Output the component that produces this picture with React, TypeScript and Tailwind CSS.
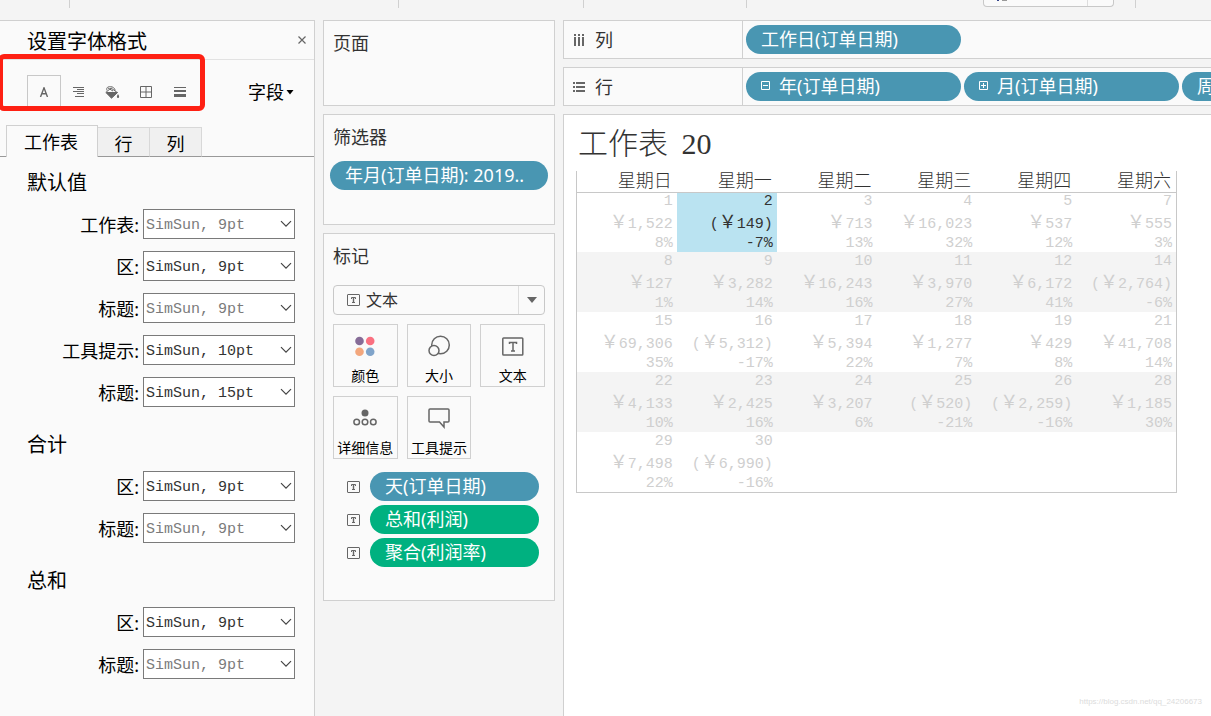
import type { ReactNode } from 'react';
import clsx from 'clsx';

const UI_FONT = "font-['Noto_Sans','Noto_Sans_CJK_SC',sans-serif]";
const MONO_FONT = "font-['Liberation_Mono','Noto_Sans_CJK_SC',monospace]";

type Field = { label: string; size: number; muted?: boolean };

const SECTIONS: { title: string; fields: Field[] }[] = [
  {
    title: '默认值',
    fields: [
      { label: '工作表:', size: 9, muted: true },
      { label: '区:', size: 9 },
      { label: '标题:', size: 9, muted: true },
      { label: '工具提示:', size: 10 },
      { label: '标题:', size: 15 },
    ],
  },
  {
    title: '合计',
    fields: [
      { label: '区:', size: 9 },
      { label: '标题:', size: 9, muted: true },
    ],
  },
  {
    title: '总和',
    fields: [
      { label: '区:', size: 9 },
      { label: '标题:', size: 9, muted: true },
    ],
  },
];

const WEEKDAYS = ['星期日', '星期一', '星期二', '星期三', '星期四', '星期六'];

type Day = [day: string, amount: string, ratio: string] | null;

const WEEKS: Day[][] = [
  [['1', '￥1,522', '8%'], ['2', '(￥149)', '-7%'], ['3', '￥713', '13%'], ['4', '￥16,023', '32%'], ['5', '￥537', '12%'], ['7', '￥555', '3%']],
  [['8', '￥127', '1%'], ['9', '￥3,282', '14%'], ['10', '￥16,243', '16%'], ['11', '￥3,970', '27%'], ['12', '￥6,172', '41%'], ['14', '(￥2,764)', '-6%']],
  [['15', '￥69,306', '35%'], ['16', '(￥5,312)', '-17%'], ['17', '￥5,394', '22%'], ['18', '￥1,277', '7%'], ['19', '￥429', '8%'], ['21', '￥41,708', '14%']],
  [['22', '￥4,133', '10%'], ['23', '￥2,425', '16%'], ['24', '￥3,207', '6%'], ['25', '(￥520)', '-21%'], ['26', '(￥2,259)', '-16%'], ['28', '￥1,185', '30%']],
  [['29', '￥7,498', '22%'], ['30', '(￥6,990)', '-16%'], null, null, null, null],
];

function TextMarkIcon({ className }: { className: string }) {
  return (
    <svg viewBox="0 0 13 12" className={className} fill="none" stroke="#666">
      <rect x="0.5" y="0.5" width="12" height="11" rx="0.5" />
      <path d="M4.5 5V3.5h4V5M5 8.5h3" />
      <path d="M6.5 3.5v5" strokeWidth="1.4" />
    </svg>
  );
}

function Chevron() {
  return (
    <svg viewBox="0 0 12 8" className="pointer-events-none absolute right-[3px] top-[11px] h-2 w-3" fill="none" stroke="#444" strokeWidth="1.2">
      <path d="M1 1.2l5 5 5-5" />
    </svg>
  );
}

function FontField({ id, field }: { id: string; field: Field }) {
  return (
    <div className="flex h-[42px] items-start justify-end pr-[19px]">
      <label htmlFor={id} className="pr-1 text-lg leading-8 text-black">
        {field.label}
      </label>
      <div className="relative w-[152px]">
        <select
          id={id}
          className={clsx(
            'block h-[30px] w-full appearance-none border border-[#7a7a7a] bg-white pl-0.5 pt-1 text-[15px]',
            MONO_FONT,
            field.muted ? 'text-[#7b7b7b]' : 'text-[#333]',
          )}
        >
          <option>{`SimSun, ${field.size}pt`}</option>
        </select>
        <Chevron />
      </div>
    </div>
  );
}

function FormatPanel() {
  return (
    <aside className="relative flex w-[315px] shrink-0 flex-col border-r border-t border-[#d0d0d0] bg-[#fafafa]">
      <header className="flex h-[39px] items-center justify-between border-b border-[#e2e2e2] pl-[27px] pr-[7px]">
        <h1 className="pt-[3px] text-xl leading-6 text-black">设置字体格式</h1>
        <button type="button" aria-label="关闭" className="flex h-5 w-2.5 items-center">
          <svg viewBox="0 0 10 10" className="h-2.5 w-2.5" stroke="#666" strokeWidth="1.2">
            <path d="M1.5 1.5l7 7M8.5 1.5l-7 7" />
          </svg>
        </button>
      </header>

      <div className="flex h-[65px] items-start pt-[15px]">
        <button type="button" aria-label="字体" className="ml-[27px] flex h-[34px] w-[34px] items-center justify-center border border-[#c8c8c8]">
          <svg viewBox="0 0 10 10" className="h-2.5 w-2.5" fill="none" stroke="#666" strokeWidth="1.4">
            <path d="M1.5 10L5 .8 8.500 10M2.800 6.800h4.400" />
          </svg>
        </button>
        <button type="button" aria-label="对齐" className="flex h-[34px] w-[34px] items-center justify-center">
          <svg viewBox="0 0 11 10" className="h-2.5 w-[11px]" stroke="#666">
            <path d="M0 .5h11M4 2.500h7M0 4.500h11M4 6.500h7M2 9.500h9" />
          </svg>
        </button>
        <button type="button" aria-label="阴影" className="flex h-[34px] w-[34px] items-center justify-center">
          <svg viewBox="0 0 15 13" className="h-[13px] w-[15px]" fill="none" stroke="#666">
            <path d="M.8 6.500L6 2l6.200 4.500L6.500 12z" />
            <path d="M1.500 6.500h11l-6 5.500z" fill="#666" />
            <path d="M2 4.500C1 1.500 3 .5 5.500.7 8 .7 9.500 2 10.300 4.500M3 2l5 3" />
            <path d="M13 8c1.500 2.200 1.500 4 0 4s-1.500-1.800 0-4z" fill="#666" stroke="none" />
          </svg>
        </button>
        <button type="button" aria-label="边界" className="flex h-[34px] w-[34px] items-center justify-center">
          <svg viewBox="0 0 12 12" className="h-3 w-3" fill="none" stroke="#666">
            <path d="M.5.5h11v11H.5zM6 .5v11M.5 6h11" />
          </svg>
        </button>
        <button type="button" aria-label="线" className="flex h-[34px] w-[34px] items-center justify-center">
          <svg viewBox="0 0 12 10" className="h-2.5 w-3" fill="#666">
            <path d="M0 0h12v1H0zM0 3h12v2H0zM0 7h12v3H0z" />
          </svg>
        </button>
        <button type="button" className="ml-auto mr-5 flex h-[34px] items-center gap-0.5 text-lg text-black">
          字段
          <svg viewBox="0 0 8 5" className="h-[5px] w-2" fill="#000">
            <path d="M.5 0h7L4 4.500z" />
          </svg>
        </button>
      </div>

      <div className="flex h-8 items-end" role="tablist">
        <div className="h-8 w-1.5 border-b border-[#999]" />
        <button type="button" role="tab" aria-selected="true" className="h-8 w-[92px] border-x border-t border-[#d0d0d0] pr-0.5 text-lg text-black">
          工作表
        </button>
        <button type="button" role="tab" aria-selected="false" className="h-[30px] w-[51px] border-b border-t border-b-[#999] border-t-[#d8d8d8] bg-[#f0f0f0] pt-0.5 text-lg text-black">
          行
        </button>
        <button type="button" role="tab" aria-selected="false" className="h-[30px] w-[53px] border border-[#d8d8d8] border-b-[#999] bg-[#f0f0f0] pt-0.5 text-lg text-black">
          列
        </button>
        <div className="h-8 flex-1 border-b border-[#999]" />
      </div>

      {SECTIONS.map((section, s) => (
        <section key={section.title}>
          <h2 className="pl-[27px] text-xl leading-[52px] text-black">{section.title}</h2>
          {section.fields.map((field, f) => (
            <FontField key={f} id={`font-${s}-${f}`} field={field} />
          ))}
        </section>
      ))}

      <div className="pointer-events-none absolute -left-0.5 top-[33px] h-[57px] w-[207px] rounded-md border-[5px] border-[#fe2013]" />
    </aside>
  );
}

function Pill({ children, green, className }: { children: ReactNode; green?: boolean; className?: string }) {
  return (
    <button
      type="button"
      className={clsx(
        'flex h-[29px] shrink-0 items-center overflow-hidden whitespace-nowrap rounded-full pb-0.5 pl-[15px] text-lg text-white',
        green ? 'bg-[#00b180]' : 'bg-[#4996b2]',
        className,
      )}
    >
      {children}
    </button>
  );
}

function ExpandIcon({ plus }: { plus?: boolean }) {
  return (
    <svg viewBox="0 0 9 9" className="mr-[9px] h-[9px] w-[9px]" fill="none" stroke="#fff">
      <path d={plus ? 'M.5.5h8v8h-8zM2 4.500h5M4.500 2v5' : 'M.5.5h8v8h-8zM2 4.500h5'} />
    </svg>
  );
}

function MarkButton({ label, children }: { label: string; children: ReactNode }) {
  return (
    <button type="button" className="flex h-[63px] flex-col items-center justify-between border border-[#d0d0d0] pt-2.5 text-sm leading-5 text-black">
      <svg viewBox="0 0 24 24" className="h-6 w-6" fill="none" stroke="#666" strokeWidth="1.5">
        {children}
      </svg>
      <span className="whitespace-nowrap">{label}</span>
    </button>
  );
}

function Cards() {
  return (
    <div className="flex w-[232px] shrink-0 flex-col gap-2 text-[#333]">
      <section className="h-[86px] border border-[#d0d0d0] bg-[#fafafa] px-[9px] pt-2">
        <h2 className="text-lg">页面</h2>
      </section>

      <section className="h-[111px] border border-[#d0d0d0] bg-[#fafafa] px-1.5 pt-2">
        <h2 className="mb-2.5 pl-[3px] text-lg">筛选器</h2>
        <Pill className="w-full">年月(订单日期): 2019..</Pill>
      </section>

      <section className="h-[368px] border border-[#d0d0d0] bg-[#fafafa] px-[9px] pt-2">
        <h2 className="mb-[15px] text-lg">标记</h2>
        <div className="relative mb-[9px]">
          <select aria-label="标记类型" className="block h-[30px] w-full appearance-none rounded-sm border border-[#c8c8c8] pl-8 text-base text-[#333]">
            <option>文本</option>
          </select>
          <TextMarkIcon className="pointer-events-none absolute left-3.5 top-[9px] h-3 w-[13px]" />
          <div className="pointer-events-none absolute inset-y-px right-px flex w-[26px] items-center justify-center border-l border-[#ddd]">
            <svg viewBox="0 0 10 6" className="h-1.5 w-2.5" fill="#666">
              <path d="M0 0h10L5 6z" />
            </svg>
          </div>
        </div>
        <div className="grid grid-cols-3 gap-[9px]">
          <MarkButton label="颜色">
            <g stroke="none">
              <circle cx="6.500" cy="6" r="4.300" fill="#866c97" />
              <circle cx="17.200" cy="6" r="4.300" fill="#fa7080" />
              <circle cx="6.500" cy="16.700" r="4.300" fill="#f3a77d" />
              <circle cx="17.200" cy="16.700" r="4.300" fill="#80a4ca" />
            </g>
          </MarkButton>
          <MarkButton label="大小">
            <circle cx="13.500" cy="10" r="8.800" />
            <circle cx="7" cy="15.500" r="5" fill="#fafafa" />
          </MarkButton>
          <MarkButton label="文本">
            <rect x="1.800" y="3" width="20" height="17" rx="0.8" />
            <path d="M8.500 9V7.500h7V9M12 7.500v8.500M10 16h4" />
          </MarkButton>
          <MarkButton label="详细信息">
            <circle cx="12" cy="6" r="3.500" fill="#666" stroke="none" />
            <circle cx="3.700" cy="15" r="2.800" />
            <circle cx="12" cy="15" r="2.800" />
            <circle cx="20.300" cy="15" r="2.800" />
          </MarkButton>
          <MarkButton label="工具提示">
            <path d="M3 2h18q1 0 1 1v11q0 1-1 1h-4v5l-4.500-5H3q-1 0-1-1V3q0-1 1-1z" />
          </MarkButton>
        </div>
        <ul className="mt-[13px] flex flex-col gap-1 pl-3.5 pr-1.5">
          {[
            { text: '天(订单日期)', green: false },
            { text: '总和(利润)', green: true },
            { text: '聚合(利润率)', green: true },
          ].map((mark) => (
            <li key={mark.text} className="flex items-center gap-2.5">
              <TextMarkIcon className="h-3 w-[13px]" />
              <Pill green={mark.green} className="flex-1">
                {mark.text}
              </Pill>
            </li>
          ))}
        </ul>
      </section>
    </div>
  );
}

function Shelf({ label, icon, children }: { label: string; icon: ReactNode; children: ReactNode }) {
  return (
    <section className="flex h-[39px] overflow-hidden border-y border-l border-[#d0d0d0] bg-[#fafafa]">
      <div className="flex w-[179px] shrink-0 items-center gap-2.5 border-r border-[#d0d0d0] pl-[9px] text-lg text-[#333]">
        <svg viewBox="0 0 12 12" className="h-3 w-3" fill="#666">
          {icon}
        </svg>
        <h2>{label}</h2>
      </div>
      <div className="flex min-w-0 flex-1 items-center gap-[3px] pl-[3px]">{children}</div>
    </section>
  );
}

function Amount({ text }: { text: string }) {
  const [before, after] = text.split('￥');
  return (
    <>
      {before}
      <span className="text-lg leading-5">￥</span>
      {after}
    </>
  );
}

function Sheet() {
  return (
    <main className="flex flex-1 flex-col border-l border-t border-[#d0d0d0] bg-white pl-3">
      <h1 className="mb-1.5 mt-[7px] font-['Liberation_Serif','Noto_Sans_CJK_SC',serif] pl-0.5 text-3xl font-light leading-[43px] text-[#333]">
        <span className="mr-1.5">工作表</span> 20
      </h1>
      <table className={clsx('w-[601px] table-fixed border-separate border-spacing-0 border-x border-b border-[#c8c8c8] text-right', MONO_FONT)}>
        <thead>
          <tr>
            {WEEKDAYS.map((day) => (
              <th key={day} scope="col" className="h-[22px] border-b border-[#c8c8c8] p-0 pr-[5px] text-lg font-light leading-5 text-[#333]">
                {day}
              </th>
            ))}
          </tr>
        </thead>
        <tbody className="text-[15px] leading-5 text-[#cfcfcf]">
          {WEEKS.map((week, w) => (
            <tr key={w} className="even:bg-[#f4f4f4]">
              {week.map((day, d) => (
                <td key={d} className={clsx('p-0 pr-1', w === 0 ? 'h-[59px]' : 'h-[60px]', day?.[0] === '2' && 'bg-[#bae3f1] text-[#333]')}>
                  {day && (
                    <>
                      <div className="h-5 leading-[18px]">{day[0]}</div>
                      <div className="h-[21px]">
                        <Amount text={day[1]} />
                      </div>
                      <div className="h-[18px]">{day[2]}</div>
                    </>
                  )}
                </td>
              ))}
            </tr>
          ))}
        </tbody>
      </table>
      <footer className="mt-auto pb-1.5 pr-[9px] text-right font-['Liberation_Sans',sans-serif] text-[8px] leading-4 text-[#dcdcdc]">
        https://blog.csdn.net/qq_24206673
      </footer>
    </main>
  );
}

function TopStrip() {
  return (
    <div className="flex h-5 shrink-0 items-start">
      <div className="h-2 w-[70px] border-r border-[#d0d0d0]" />
      <div className="h-2 w-[329px] border-r border-[#d0d0d0]" />
      <div className="h-2 w-[185px] border-r border-[#d0d0d0]" />
      <div className="h-2 w-[163px] border-r border-[#d0d0d0]" />
      <div className="ml-[236px] flex h-[7px] w-[131px] rounded-b-sm border-x border-b border-[#c8c8c8] bg-[#fafafa]">
        <svg viewBox="0 0 12 2" className="ml-3 h-0.5 w-3">
          <path d="M1 0h2v1H1z" fill="#36468c" />
          <path d="M6 0h5v1H6z" fill="#999" />
        </svg>
        <div className="ml-auto w-[26px] border-l border-[#ddd]" />
      </div>
      <div className="h-2 w-[22px] border-r border-[#d0d0d0]" />
    </div>
  );
}

export default function App() {
  return (
    <div className={clsx('flex min-h-screen flex-col overflow-hidden bg-[#f4f4f4]', UI_FONT)}>
      <TopStrip />
      <div className="flex flex-1 gap-2">
        <FormatPanel />
        <Cards />
        <div className="flex min-w-0 flex-1 flex-col gap-2">
          <Shelf
            label="列"
            icon={<path d="M1 0h2v2H1zM5 0h2v2H5zM9 0h2v2H9zM1 3h2v9H1zM5 3h2v9H5zM9 3h2v9H9z" />}
          >
            <Pill className="w-[215px]">工作日(订单日期)</Pill>
          </Shelf>
          <Shelf
            label="行"
            icon={<path d="M0 1h2v2H0zM3 1h9v2H3zM0 5h2v2H0zM3 5h9v2H3zM0 9h2v2H0zM3 9h9v2H3z" />}
          >
            <Pill className="w-[215px]">
              <ExpandIcon />
              年(订单日期)
            </Pill>
            <Pill className="w-[215px]">
              <ExpandIcon plus />
              月(订单日期)
            </Pill>
            <Pill className="w-[215px]">周(订单日期)</Pill>
          </Shelf>
          <Sheet />
        </div>
      </div>
    </div>
  );
}
